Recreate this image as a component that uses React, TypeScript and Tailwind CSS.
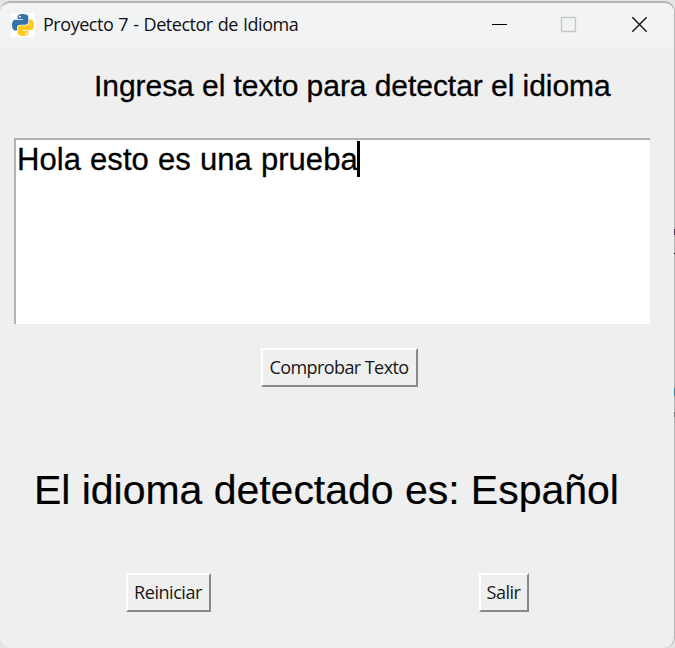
import type { ReactNode } from "react";

function PythonLogo() {
  return (
    <svg viewBox="0 0 24 24" className="h-6 w-6 shrink-0 bg-white" aria-hidden="true">
      <g transform="translate(1 1) scale(0.9167)">
        <path
          fill="#3474a8"
          d="M11.9 0C5.8 0 6.2 2.65 6.2 2.65V5.4H12v.85H3.9S0 5.8 0 11.95c0 6.15 3.4 5.93 3.4 5.93h2.03v-2.85s-.11-3.4 3.35-3.4h5.77s3.24.05 3.24-3.13V3.23S18.28 0 11.9 0ZM8.7 1.83a1.05 1.05 0 1 1 0 2.1 1.05 1.05 0 0 1 0-2.1Z"
        />
        <path
          fill="#ffcb1f"
          d="M12.1 24c6.1 0 5.7-2.65 5.7-2.65V18.6H12v-.85h8.1S24 18.2 24 12.05c0-6.15-3.4-5.93-3.4-5.93h-2.03v2.85s.11 3.4-3.35 3.4H9.45s-3.24-.05-3.24 3.13v5.27S5.72 24 12.1 24Zm3.2-1.83a1.05 1.05 0 1 1 0-2.1 1.05 1.05 0 0 1 0 2.1Z"
        />
      </g>
    </svg>
  );
}

function RaisedButton({ className, children }: { className: string; children: ReactNode }) {
  return (
    <button
      className={`flex h-[39px] shrink-0 items-center justify-center whitespace-nowrap border-2 border-t-white border-l-white border-r-[#898989] border-b-[#898989] bg-[#efefef] pb-[2px] pr-px font-['Open_Sans','Noto_Sans',sans-serif] text-[18px] leading-none text-[#181818] ${className}`}
    >
      {children}
    </button>
  );
}

export default function App() {
  return (
    <div className="relative h-[648px] w-[675px] overflow-hidden bg-[#e4e5e3] pt-px">
      <div className="flex h-[647px] w-full flex-col overflow-hidden rounded-[11px] border-t-2 border-r border-[#b5b5b5] bg-[#efefef]">
        <header className="flex h-[45px] shrink-0 items-center bg-[#f1f3f5] pb-px pl-[11px]">
          <PythonLogo />
          <span className="ml-2 w-[420px] whitespace-nowrap pb-[3px] font-['Open_Sans','Noto_Sans',sans-serif] text-[18px] leading-none tracking-[-0.46px] [word-spacing:0.8px] text-[#111111]">
            Proyecto 7 - Detector de Idioma
          </span>
          <svg width="160" height="20" viewBox="0 0 160 20" fill="none" className="ml-[28px] shrink-0" aria-hidden="true">
            <path d="M1 9.5H16" stroke="#000" />
            <rect x="70.5" y="2.5" width="14" height="14" rx="1" stroke="#c4c5c7" strokeWidth="1.3" />
            <path d="M141.3 2.3L155.7 16.7M155.7 2.3L141.3 16.7" stroke="#111" strokeWidth="1.4" />
          </svg>
        </header>
        <main className="flex flex-1 flex-col font-['Liberation_Sans',Arial,sans-serif] text-black">
          <h1 className="ml-[94px] mt-[20px] h-[36px] whitespace-nowrap text-[30px] leading-[36px] tracking-[-0.05px] [-webkit-text-stroke:0.3px_black]">
            Ingresa el texto para detectar el idioma
          </h1>
          <div className="ml-[14px] mt-[34px] flex h-[186px] w-[636px] shrink-0 items-start border-t-2 border-l-2 border-[#b2b2b2] bg-white pl-px">
            <span className="whitespace-nowrap text-[31px] leading-[40px] tracking-[0.04px] [word-spacing:0.5px] [-webkit-text-stroke:0.3px_black]">
              Hola esto es una prueba
            </span>
            <span className="-ml-px mt-px h-[36px] w-[3px] bg-black" />
          </div>
          <RaisedButton className="ml-[261px] mt-[24px] w-[157px] tracking-[-0.57px]">Comprobar Texto</RaisedButton>
          <p className="ml-[34px] mt-[79px] h-[48px] whitespace-nowrap text-[41px] leading-[48px] tracking-[-0.03px] [-webkit-text-stroke:0.2px_black]">
            El idioma detectado es: Español
          </p>
          <div className="ml-[126px] mt-[59px] flex">
            <RaisedButton className="w-[85px] tracking-[-0.45px]">Reiniciar</RaisedButton>
            <RaisedButton className="ml-[268px] w-[50px] tracking-[-0.5px]">Salir</RaisedButton>
          </div>
        </main>
      </div>
      <span className="absolute right-0 top-[229px] h-[6px] w-px bg-[#4a3f4c]" />
      <span className="absolute right-0 top-[253px] h-px w-px bg-black" />
      <span className="absolute right-0 top-[388px] h-[8px] w-px bg-[#3a7fa8]" />
      <span className="absolute right-0 top-[412px] h-[5px] w-px bg-[#777777]" />
    </div>
  );
}
